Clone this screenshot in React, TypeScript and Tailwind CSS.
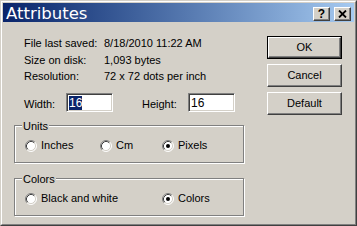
// Paint "Attributes" dialog, Windows classic look

const SANS = "font-['Liberation_Sans',Arial,sans-serif]";

function Radio({ checked }: { checked?: boolean }) {
  return (
    <svg width="12" height="12" viewBox="0 0 12 12" className="shrink-0" aria-hidden="true">
      <circle cx="6" cy="6" r="5" fill="#fff" />
      <path d="M2.11 9.89 A5.5 5.5 0 0 1 9.89 2.11" stroke="#808080" fill="none" />
      <path d="M9.89 2.11 A5.5 5.5 0 0 1 2.11 9.89" stroke="#fff" fill="none" />
      <path d="M2.82 9.18 A4.5 4.5 0 0 1 9.18 2.82" stroke="#404040" fill="none" />
      <path d="M9.18 2.82 A4.5 4.5 0 0 1 2.82 9.18" stroke="#d4d0c8" fill="none" />
      {checked && <circle cx="6" cy="6" r="2" fill="#000" />}
    </svg>
  );
}

function RadioItem({ label, checked, width }: { label: string; checked?: boolean; width: string }) {
  return (
    <div className={`flex h-[13px] items-center gap-[4px] ${width}`}>
      <Radio checked={checked} />
      <span className="leading-[13px]">{label}</span>
    </div>
  );
}

function PushButton({ label, isDefault }: { label: string; isDefault?: boolean }) {
  return (
    <div className={`h-[23px] w-[75px] ${isDefault ? 'border border-black' : ''}`}>
      <div className="flex h-full w-full items-center justify-center border border-t-white border-l-white border-b-[#404040] border-r-[#404040] shadow-[inset_-1px_-1px_0_#808080]">
        {label}
      </div>
    </div>
  );
}

function Edit({ value, selected }: { value: string; selected?: boolean }) {
  return (
    <div className="flex h-[19px] w-[47px] items-center border border-t-[#808080] border-l-[#808080] border-b-white border-r-white bg-white pl-[2px] text-[12px] shadow-[inset_1px_1px_0_#404040,inset_-1px_-1px_0_#d4d0c8]">
      <span className={selected ? 'bg-[#0a246a] leading-[14px] text-white' : 'leading-[14px]'}>{value}</span>
    </div>
  );
}

function GroupBox({ title, children, labelTop }: { title: string; children: React.ReactNode; labelTop: string }) {
  return (
    <div className="relative h-[38px] w-[230px] border border-[#808080] shadow-[inset_1px_1px_0_#fff,1px_1px_0_#fff]">
      <span className={`absolute left-[7px] bg-[#d4d0c8] px-[1px] leading-[13px] ${labelTop}`}>{title}</span>
      <div className="flex pl-[10px] pt-[13px]">{children}</div>
    </div>
  );
}

function TitleButton({ children }: { children: React.ReactNode }) {
  return (
    <div className="flex h-[14px] w-[17px] items-center justify-center border border-t-white border-l-white border-b-[#404040] border-r-[#404040] bg-[#d4d0c8] shadow-[inset_-1px_-1px_0_#808080]">
      {children}
    </div>
  );
}

export default function App() {
  return (
    <div className={`h-[226px] w-[357px] border border-t-[#d4d0c8] border-l-[#d4d0c8] border-b-[#404040] border-r-[#404040] bg-[#d4d0c8] text-[11px] text-black ${SANS}`}>
      <div className="h-full w-full border border-t-white border-l-white border-b-[#808080] border-r-[#808080] p-[1px]">
        {/* Title bar */}
        <div className="flex h-[19px] bg-linear-to-r from-[#0a246a] to-[#a6caf0] pl-[3px] pr-[3px]">
          <span className="pt-[1px] font-['DejaVu_Sans',sans-serif] text-[16.5px] leading-[19px] text-white">
            Attributes
          </span>
          <div className="ml-auto flex items-start gap-[4px] pt-[4px]">
            <TitleButton>
              <span className={`text-[12px] font-bold leading-none ${SANS}`}>?</span>
            </TitleButton>
            <TitleButton>
              <svg width="9" height="8" viewBox="0 0 9 8" aria-hidden="true">
                <path d="M1 0.5 L8 7.5 M8 0.5 L1 7.5" stroke="#000" strokeWidth="1.8" fill="none" />
              </svg>
            </TitleButton>
          </div>
        </div>

        {/* Body */}
        <div className="flex pl-[11px]">
          <div className="flex w-[230px] flex-col pt-[13px]">
            <div className="grid grid-cols-[80px_auto] pl-[10px] leading-[16.5px]">
              <span>File last saved:</span>
              <span>8/18/2010 11:22 AM</span>
              <span>Size on disk:</span>
              <span>1,093 bytes</span>
              <span>Resolution:</span>
              <span>72 x 72 dots per inch</span>
            </div>

            <div className="mt-[8.5px] flex h-[19px] pl-[10px]">
              <span className="w-[42px] pt-[3px]">Width:</span>
              <Edit value="16" selected />
              <span className="ml-[29px] w-[46px] pt-[3px]">Height:</span>
              <Edit value="16" />
            </div>

            <div className="mt-[13px]">
              <GroupBox title="Units" labelTop="-top-[6px]">
                <RadioItem label="Inches" width="w-[75px]" />
                <RadioItem label="Cm" width="w-[62px]" />
                <RadioItem label="Pixels" checked width="w-[60px]" />
              </GroupBox>
            </div>

            <div className="mt-[15px]">
              <GroupBox title="Colors" labelTop="-top-[6px]">
                <RadioItem label="Black and white" width="w-[137px]" />
                <RadioItem label="Colors" checked width="w-[60px]" />
              </GroupBox>
            </div>
          </div>

          <div className="ml-[23px] flex flex-col gap-[5px] pt-[14px]">
            <PushButton label="OK" isDefault />
            <PushButton label="Cancel" />
            <PushButton label="Default" />
          </div>
        </div>
      </div>
    </div>
  );
}
